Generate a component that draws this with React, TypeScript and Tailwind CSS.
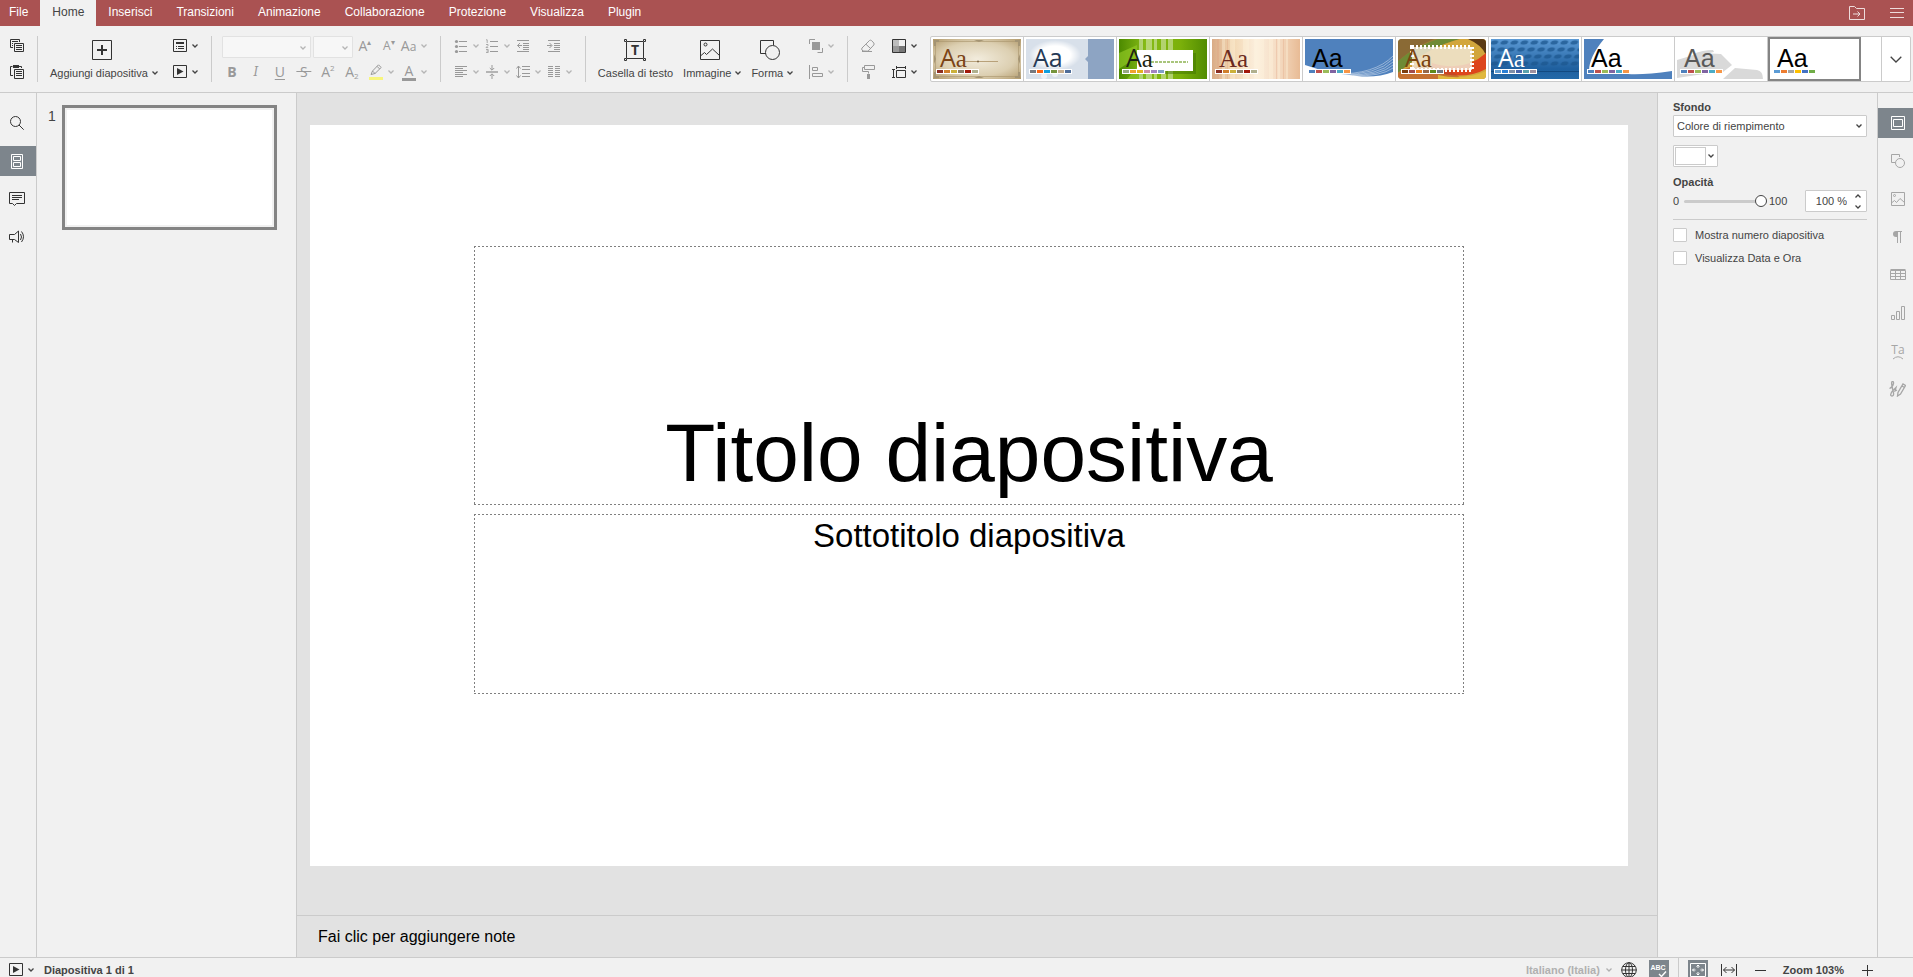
import { useState } from "react";
import type { ReactNode } from "react";

type IconProps = { w?: number; h?: number; children: ReactNode; className?: string };

function Icon({ w = 14, h = 14, children, className = "" }: IconProps) {
  return (
    <svg
      width={w}
      height={h}
      viewBox={`0 0 ${w} ${h}`}
      fill="none"
      stroke="currentColor"
      className={`shrink-0 ${className}`}
      aria-hidden="true"
    >
      {children}
    </svg>
  );
}

function Caret({ className = "" }: { className?: string }) {
  return (
    <Icon w={6} h={4} className={className}>
      <path d="M.5 .5 3 3 5.5 .5" strokeWidth="1.3" />
    </Icon>
  );
}

/* ---------- toolbar icons ---------- */

const CopyIcon = () => (
  <Icon>
    <path d="M3 8.500H.5v-8h9V3" />
    <path d="M2 2.500h6M2 4.500h1M2 6.500h1" />
    <path d="M4.500 4.500h9v8h-9z" />
    <path d="M6 6.500h6M6 8.500h6M6 10.500h6" />
  </Icon>
);
const PasteIcon = () => (
  <Icon>
    <path d="M3 10.500H.5v-9h2M9 1.500h2.500V3" />
    <path d="M3 0h6v3H3z" fill="currentColor" stroke="none" />
    <path d="M4.500 4.500h9v9h-9z" />
    <path d="M6 6.500h6M6 8.500h6M6 10.500h6" />
  </Icon>
);
const AddSlideIcon = () => (
  <Icon w={20} h={20}>
    <path d="M.5 .5h19v19H.5z" />
    <path d="M10 5v10M5 10h10" strokeWidth="2" />
  </Icon>
);
const LayoutIcon = () => (
  <Icon>
    <path d="M.5 .5h13v12H.5z" />
    <path d="M3 4h8" strokeWidth="2" />
    <path d="M3 7.500h1M5 7.500h6M3 9.500h1M5 9.500h6" />
  </Icon>
);
const PlayIcon = () => (
  <Icon>
    <path d="M.5 .5h13v12H.5z" />
    <path d="M4 3v7l6.500-3.500z" fill="currentColor" stroke="none" />
  </Icon>
);
const HighlightIcon = () => (
  <Icon w={14} h={16}>
    <path d="M2 10.500 3.500 7 9.500 .8l2.700 2.700L6 9.500zM3.500 7 6 9.500M8 2.300 10.700 5" />
    <path d="M0 14.500h14" stroke="#f7f57c" strokeWidth="3" />
  </Icon>
);
const BulletsIcon = () => (
  <Icon>
    <path d="M5 2.500h8M5 7.500h8M5 12.500h8" />
    <g fill="currentColor" stroke="none">
      <circle cx="2.500" cy="2.500" r="1.600" />
      <circle cx="2.500" cy="7.500" r="1.600" />
      <circle cx="2.500" cy="12.500" r="1.600" />
    </g>
  </Icon>
);
const NumberingIcon = () => (
  <Icon>
    <path d="M5 2.500h8M5 7.500h8M5 12.500h8" />
    <path d="M1 .8h1.200V4M1 5.500h2v1L1 8.600h2.200M1 10.500h2.200v3H1M1.500 12h1.500" strokeWidth=".8" />
  </Icon>
);
const OutdentIcon = () => (
  <Icon>
    <path d="M1 1.500h12M7 4.500h6M7 6.500h6M7 8.500h6M7 10.500h6M1 12.500h12" />
    <path d="M6 6.500H1.500M4 4 1.500 6.500 4 9" />
  </Icon>
);
const IndentIcon = () => (
  <Icon>
    <path d="M1 1.500h12M7 4.500h6M7 6.500h6M7 8.500h6M7 10.500h6M1 12.500h12" />
    <path d="M0 6.500h4.500M2.500 4 5 6.500 2.500 9" />
  </Icon>
);
const AlignLeftIcon = () => (
  <Icon>
    <path d="M1 1.500h12M1 3.500h8M1 5.500h12M1 7.500h8M1 9.500h12M1 11.500h8" />
  </Icon>
);
const AlignMiddleIcon = () => (
  <Icon>
    <path d="M1 6.500h12M1 7.500h12" strokeWidth=".7" />
    <path d="M7 0v5M4.800 3 7 5.200 9.200 3M7 14V9M4.800 11 7 8.800 9.200 11" />
  </Icon>
);
const LineSpacingIcon = () => (
  <Icon>
    <path d="M2.500 1v12M.5 3.500l2-2.500 2 2.500M.5 10.500l2 2.500 2-2.500" />
    <path d="M6 1.500h8M6 4.500h8M6 8.500h8M6 11.500h8" />
  </Icon>
);
const ColumnsIcon = () => (
  <Icon>
    <path d="M1 1.500h5M1 3.500h5M1 5.500h5M1 7.500h5M1 9.500h5M1 11.500h5M8 1.500h5M8 3.500h5M8 5.500h5M8 7.500h5M8 9.500h5M8 11.500h5" />
  </Icon>
);
const TextBoxIcon = () => (
  <Icon w={22} h={22}>
    <path d="M2.500 3v16M19.500 3v16M3 2.500h16M3 19.500h16" />
    <path d="M.5 .5h2v2h-2zM19.500 .5h2v2h-2zM.5 19.500h2v2h-2zM19.500 19.500h2v2h-2z" />
    <text
      x="11"
      y="16"
      textAnchor="middle"
      fill="currentColor"
      stroke="none"
      fontFamily="Open Sans, Liberation Sans, sans-serif"
      fontWeight="700"
      fontSize="14"
    >
      T
    </text>
  </Icon>
);
const ImageIcon = () => (
  <Icon w={20} h={20}>
    <path d="M.5 .5h19v19H.5z" />
    <circle cx="5.500" cy="4.500" r="1.500" />
    <path d="M1 15.500l3.500-3 2 2 6-5.500 7 6.500" />
  </Icon>
);
const ShapeIcon = () => (
  <Icon w={20} h={20}>
    <path d="M6 13.500H.5V.5h13V5" />
    <circle cx="12.500" cy="12.500" r="7" />
  </Icon>
);
const ArrangeIcon = () => (
  <Icon>
    <path d="M3 3h8v8H3z" fill="currentColor" stroke="none" />
    <path d="M6 .5H.5V5M8.500 13.500h5V9" />
  </Icon>
);
const AlignObjectsIcon = () => (
  <Icon>
    <path d="M.5 0v14M3.500 2.500h5v3h-5zM3.500 8.500h10v3h-10z" />
  </Icon>
);
const EraserIcon = () => (
  <Icon>
    <path d="M2 12 1 11Q.3 10 1 9L8.500 1.500Q9.500 .8 10.500 1.500L12.800 4Q13.400 5 12.800 6L7 12.200zM5 5.300l5 4.600M1 12.500h10" />
  </Icon>
);
const RollerIcon = () => (
  <Icon>
    <path d="M3.500 .5h10v4h-10zM3.500 2.500H1.500v4h6v2" />
    <path d="M6 9h3v5H6z" fill="currentColor" stroke="none" />
  </Icon>
);
const SchemeIcon = () => (
  <Icon>
    <path d="M1 1h6v6H1z" fill="#bdbdbd" stroke="none" />
    <path d="M7 1h6v6H7z" fill="#f1f1f1" stroke="none" />
    <path d="M1 7h6v6H1z" fill="#999" stroke="none" />
    <path d="M7 7h6v6H7z" fill="#777" stroke="none" />
    <path d="M.5 .5h13v13H.5z" />
  </Icon>
);
const SlideSizeIcon = () => (
  <Icon>
    <path d="M4.500 5.500h9v7h-9zM1.500 4v9M0 4.500h3M0 12.500h3M4 2.500h10M4.500 1v3M13.500 1v3" />
  </Icon>
);

/* ---------- theme gallery ---------- */

type Theme = {
  name: string;
  fg: string;
  fontA: string;
  fontB: string;
  colors: string[];
  art: ReactNode;
};

const SANS = "Liberation Sans, Arial, sans-serif";
const HUMAN = "Open Sans, Noto Sans, sans-serif";
const SERIF = "Liberation Serif, Times New Roman, serif";

const themes: Theme[] = [
  {
    name: "Classic",
    fg: "#7b4416",
    fontA: HUMAN,
    fontB: SERIF,
    colors: ["#8c2e22", "#d17f2c", "#ccb13a", "#8c7d68", "#a3190b", "#b0b08e"],
    art: (
      <>
        <defs>
          <radialGradient id="classic" cx=".5" cy=".5" r=".7">
            <stop offset="0" stopColor="#f2ecdd" />
            <stop offset=".6" stopColor="#dccfb1" />
            <stop offset="1" stopColor="#b39b6d" />
          </radialGradient>
        </defs>
        <path d="M0 0h88v40H0z" fill="url(#classic)" />
        <path d="M2.500 2.500h83v35h-83z" fill="none" stroke="#a8946c" strokeOpacity=".6" />
        <path d="M1 1h5v2H3v4H1zM87 1h-5v2h3v4h2zM1 39h5v-2H3v-4H1zM87 39h-5v-2h3v-4h2zM41 1h10l-5 2zM41 39h10l-5-2zM1 15l2 5-2 5zM87 15l-2 5 2 5z" fill="#a49474" />
        <path d="M32 22.500h33" stroke="#b8a17a" />
        <circle cx="45" cy="22.500" r="1" fill="#7d6644" />
      </>
    ),
  },
  {
    name: "Dotted",
    fg: "#263a56",
    fontA: HUMAN,
    fontB: HUMAN,
    colors: ["#76797f", "#fa6414", "#0f9fe0", "#76953e", "#c5ad8e", "#4f6d99"],
    art: (
      <>
        <defs>
          <radialGradient id="cloud">
            <stop offset=".6" stopColor="#fff" />
            <stop offset="1" stopColor="#fff" stopOpacity="0" />
          </radialGradient>
        </defs>
        <path d="M0 0h62v40H0z" fill="#d8e0ea" />
        <ellipse cx="29" cy="16" rx="26" ry="15" fill="url(#cloud)" />
        <circle cx="18" cy="37" r="3" fill="#edf1f6" />
        <circle cx="29" cy="35" r="3" fill="#edf1f6" />
        <path d="M62 0h26v40H62zM62 17l-3 3 3 3z" fill="#8da4c3" />
      </>
    ),
  },
  {
    name: "Green leaf",
    fg: "#1d2410",
    fontA: HUMAN,
    fontB: SERIF,
    colors: ["#98a982", "#f0a22e", "#e6b31e", "#cf8fa4", "#a285c1", "#7fa0c6"],
    art: (
      <>
        <defs>
          <linearGradient id="leaf">
            <stop offset="0" stopColor="#4c8a00" />
            <stop offset=".3" stopColor="#86bb17" />
            <stop offset=".7" stopColor="#7bb00a" />
            <stop offset="1" stopColor="#518c02" />
          </linearGradient>
        </defs>
        <path d="M0 0h88v40H0z" fill="url(#leaf)" />
        <path d="M0 14 18 6v12L0 30zM8 40l12-14v14z" fill="#98cf28" fillOpacity=".6" />
        <path d="M20 0h4v40h-4zM27 0h6v40h-6zM35 0h3v40h-3zM42 0h5v40h-5zM49 0h5v40h-5z" fill="#fff" fillOpacity=".4" />
        <path d="M20 14h57v21H20z" fill="#3f7300" fillOpacity=".5" />
        <path d="M18 11h56v21H18z" fill="#fff" />
        <path d="M32 23h37" stroke="#a9c57c" strokeWidth="2" strokeDasharray="3 1" />
      </>
    ),
  },
  {
    name: "Lines",
    fg: "#6b2a20",
    fontA: SERIF,
    fontB: SERIF,
    colors: ["#8c2e22", "#d17f2c", "#ccb13a", "#8c7d68", "#a3190b", "#b0b08e"],
    art: (
      <>
        <defs>
          <linearGradient id="lines">
            <stop offset="0" stopColor="#d9ab86" />
            <stop offset=".25" stopColor="#f3d9b5" />
            <stop offset=".5" stopColor="#fbeedd" />
            <stop offset=".75" stopColor="#f5dcc3" />
            <stop offset="1" stopColor="#e8bb95" />
          </linearGradient>
        </defs>
        <path d="M0 0h88v40H0z" fill="url(#lines)" />
        <path d="M10 0h3v40h-3zM18 0h5v40h-5zM31 0h6v40h-6zM42 0h10v40H42zM57 0h4v40h-4zM66 0h2v40h-2zM74 0h2v40h-2z" fill="#fff6e0" fillOpacity=".35" />
        <path d="M5 0h2v40H5zM15 0h1v40h-1zM64 0h1v40h-1zM71 0h1v40h-1z" fill="#dfa07e" fillOpacity=".3" />
      </>
    ),
  },
  {
    name: "Corner",
    fg: "#000",
    fontA: SANS,
    fontB: SANS,
    colors: ["#4f81bd", "#c0504d", "#9bbb59", "#8064a2", "#4bacc6", "#f79646"],
    art: (
      <>
        <path d="M0 0h88v33Q72 39 52 37Q22 34 0 26z" fill="#4f81bd" />
        <g fill="none" stroke="#fff" strokeOpacity=".6" strokeWidth=".7">
          <path d="M35 35.500Q72 36 88 20M40 36Q74 36.500 88 23M44 36.500Q75 37 88 26M48 37Q76 37.500 88 29M30 35Q70 35.500 88 17" />
        </g>
      </>
    ),
  },
  {
    name: "Official",
    fg: "#7a4410",
    fontA: HUMAN,
    fontB: SERIF,
    colors: ["#7f3f10", "#a34c4c", "#ea7f1c", "#97694a", "#5f8a1c", "#6f7681"],
    art: (
      <>
        <defs>
          <clipPath id="officialClip">
            <rect width="88" height="40" rx="4" />
          </clipPath>
        </defs>
        <g clipPath="url(#officialClip)">
          <path d="M0 0h88v40H0z" fill="#9a7d34" />
          <path d="M0 0h36Q16 8 0 22z" fill="#8a6a35" />
          <path d="M0 22Q16 8 40 0h22Q30 8 0 34z" fill="#6f8a35" />
          <path d="M0 34Q30 8 62 0h26v40H0z" fill="#d2a63c" />
          <path d="M70 0h18v16Q84 6 70 0z" fill="#5b3a14" />
          <path d="M34 24Q66 34 88 14v16Q66 42 34 32z" fill="#dd451c" />
          <path d="M0 34Q14 24 34 27t30 13H0z" fill="#b8452a" fillOpacity=".55" />
          <path d="M40 36Q66 42 88 32v8H40z" fill="#e0b83f" />
        </g>
        <path d="M14 8h60v23H14z" fill="#f1e6d4" fillOpacity=".85" />
        <path d="M14 8h60v23H14z" fill="none" stroke="#fff" strokeWidth="4" strokeDasharray="2 2" />
      </>
    ),
  },
  {
    name: "Pixel",
    fg: "#fff",
    fontA: HUMAN,
    fontB: SERIF,
    colors: ["#629dd1", "#297fd5", "#7f8fa9", "#4a66ac", "#5aa2ae", "#9d90a0"],
    art: (
      <>
        <defs>
          <linearGradient id="pixel" x2="0" y2="1">
            <stop offset="0" stopColor="#5d9bd6" />
            <stop offset=".75" stopColor="#1e5f9e" />
            <stop offset="1" stopColor="#2469a8" />
          </linearGradient>
          <pattern id="dots" width="10" height="7" patternUnits="userSpaceOnUse" patternTransform="skewX(-25)">
            <ellipse cx="5" cy="3.500" rx="3.700" ry="2.200" fill="#1c568f" fillOpacity=".75" />
          </pattern>
        </defs>
        <path d="M0 0h88v40H0z" fill="url(#pixel)" />
        <path d="M0 0h88v28H0z" fill="url(#dots)" />
        <path d="M0 32.500h88" stroke="#134a80" />
      </>
    ),
  },
  {
    name: "Safari",
    fg: "#000",
    fontA: SANS,
    fontB: SANS,
    colors: ["#4f81bd", "#c0504d", "#9bbb59", "#8064a2", "#4bacc6", "#f79646"],
    art: (
      <>
        <path d="M0 0h88v40H0z" fill="#4f81bd" />
        <path d="M20 0h68v32Q60 36 44 35T5 32Q5 18 20 0z" fill="#fff" />
      </>
    ),
  },
  {
    name: "Turtle",
    fg: "#595959",
    fontA: SANS,
    fontB: SANS,
    colors: ["#4f81bd", "#c0504d", "#9bbb59", "#8064a2", "#4bacc6", "#f79646"],
    art: (
      <>
        <path d="M0 0h88v40H0z" fill="#fff" />
        <path
          d="M0 21 10 18l12-4 22 1 11 11-9 7-26 3-20 3zM16 15q10-4 20-4l1 2-14 3zM46 40l12-11 22 2q6 1 6 9z"
          fill="#d9d9d9"
        />
      </>
    ),
  },
  {
    name: "Blank",
    fg: "#000",
    fontA: SANS,
    fontB: SANS,
    colors: ["#5b9bd5", "#ed7d31", "#a5a5a5", "#ffc000", "#4472c4", "#70ad47"],
    art: <path d="M0 0h88v40H0z" fill="#fff" />,
  },
];

function ThemeThumb({ theme }: { theme: Theme }) {
  return (
    <svg width="88" height="40" viewBox="0 0 88 40" aria-hidden="true">
      {theme.art}
      <text x="7" y="28" fontSize="25" fill={theme.fg}>
        <tspan fontFamily={theme.fontA}>A</tspan>
        <tspan fontFamily={theme.fontB}>a</tspan>
      </text>
      <path d="M3 30h43v5H3z" fill="#fff" />
      {theme.colors.map((c, i) => (
        <rect key={i} x={4 + i * 7} y="31" width="6" height="3" fill={c} />
      ))}
    </svg>
  );
}

/* ---------- small building blocks ---------- */

function Separator() {
  return <div className="h-[46px] w-px shrink-0 bg-[#cbcbcb]" />;
}

function ToolButton({
  label,
  children,
  caret = false,
  disabled = false,
}: {
  label: string;
  children: ReactNode;
  caret?: boolean;
  disabled?: boolean;
}) {
  return (
    <button
      type="button"
      aria-label={label}
      disabled={disabled}
      className={`flex h-5 shrink-0 items-center gap-[5px] ${disabled ? "text-[#999]" : "text-[#333]"}`}
    >
      {children}
      {caret && <Caret className={disabled ? "text-[#b5b5b5]" : "text-[#444]"} />}
    </button>
  );
}

function LetterButton({ label, children }: { label: string; children: ReactNode }) {
  return (
    <button
      type="button"
      aria-label={label}
      disabled
      className="flex h-5 w-6 shrink-0 items-center justify-center font-['Open_Sans',sans-serif] text-sm leading-5 text-[#999]"
    >
      {children}
    </button>
  );
}

function BigButton({ label, children, caret = false }: { label: string; children: ReactNode; caret?: boolean }) {
  return (
    <button type="button" className="flex shrink-0 flex-col items-center gap-[2px] pt-[3px] text-[#333]">
      <span className={`flex h-[22px] items-center ${caret ? "pr-1" : ""}`}>{children}</span>
      <span className="flex h-5 items-center gap-1 whitespace-nowrap text-[#444]">
        {label}
        {caret && <Caret />}
      </span>
    </button>
  );
}

function FakeCombo({ label, className }: { label: string; className: string }) {
  return (
    <span className={`relative block h-[22px] shrink-0 ${className}`}>
      <select
        aria-label={label}
        disabled
        className="h-full w-full appearance-none rounded-[1px] border border-[#e2e2e2] bg-[#f7f7f7]"
      />
      <Caret className="absolute top-[10px] right-[5px] text-[#b5b5b5]" />
    </span>
  );
}

const tabs = [
  "File",
  "Home",
  "Inserisci",
  "Transizioni",
  "Animazione",
  "Collaborazione",
  "Protezione",
  "Visualizza",
  "Plugin",
];

function Header({ active, onSelect }: { active: string; onSelect: (t: string) => void }) {
  return (
    <header className="flex h-[26px] shrink-0 items-stretch justify-between bg-[#aa5252] text-xs text-white">
      <nav className="flex">
        {tabs.map((t) => (
          <button
            key={t}
            type="button"
            onClick={() => onSelect(t)}
            className={`px-3 pb-[2px] first:pl-[9px] ${t === active ? "bg-[#f1f1f1] text-[#444]" : ""}`}
          >
            {t}
          </button>
        ))}
      </nav>
      <div className="flex items-center gap-[25px] pr-[9px] text-[#eedcdc]">
        <button type="button" aria-label="Apri percorso file">
          <Icon w={16} h={14}>
            <path d="M.5 .5h5l2 2h8v11H.5zM4 8h7M8.500 5.500 11 8l-2.500 2.500" />
          </Icon>
        </button>
        <button type="button" aria-label="Impostazioni di visualizzazione">
          <Icon>
            <path d="M0 2.500h14M0 6.500h14M0 11.500h14" />
          </Icon>
        </button>
      </div>
    </header>
  );
}

function Toolbar() {
  const [selected, setSelected] = useState("Blank");
  return (
    <div className="flex h-[67px] shrink-0 items-start overflow-hidden border-b border-[#cbcbcb] pt-[10px] pr-[2px]">
      <div className="flex w-[37px] shrink-0 flex-col gap-[6px] pl-[10px]">
        <ToolButton label="Copia">
          <CopyIcon />
        </ToolButton>
        <ToolButton label="Incolla">
          <PasteIcon />
        </ToolButton>
      </div>
      <Separator />

      <div className="flex shrink-0 gap-[15px] pr-[13px] pl-3">
        <BigButton label="Aggiungi diapositiva" caret>
          <AddSlideIcon />
        </BigButton>
        <div className="flex flex-col gap-[6px]">
          <ToolButton label="Cambia layout" caret>
            <LayoutIcon />
          </ToolButton>
          <ToolButton label="Avvia presentazione" caret>
            <PlayIcon />
          </ToolButton>
        </div>
      </div>
      <Separator />

      <div className="flex shrink-0 flex-col gap-[6px] pr-[13px] pl-2">
        <div className="flex h-5 items-start pl-[2px]">
          <FakeCombo label="Tipo di carattere" className="mr-[2px] w-[89px]" />
          <FakeCombo label="Dimensione carattere" className="w-10" />
          <LetterButton label="Aumenta dimensione">
            A<sup className="-top-1 text-[8px] leading-none">▴</sup>
          </LetterButton>
          <LetterButton label="Riduci dimensione">
            <span className="text-xs">A</span>
            <sup className="-top-1 text-[8px] leading-none">▾</sup>
          </LetterButton>
          <ToolButton label="Maiuscole/minuscole" caret disabled>
            <span className="w-[15px] font-['Open_Sans',sans-serif] text-sm leading-5">
              A<span className="text-xs">a</span>
            </span>
          </ToolButton>
        </div>
        <div className="flex h-5 items-center">
          <LetterButton label="Grassetto">
            <b>B</b>
          </LetterButton>
          <LetterButton label="Corsivo">
            <i className="font-['DejaVu_Serif',serif] text-xs">I</i>
          </LetterButton>
          <LetterButton label="Sottolineato">
            <span className="underline underline-offset-2">U</span>
          </LetterButton>
          <LetterButton label="Barrato">
            <s>&nbsp;S&nbsp;</s>
          </LetterButton>
          <LetterButton label="Apice">
            A<sup className="-top-1 text-[8px] leading-none">2</sup>
          </LetterButton>
          <LetterButton label="Pedice">
            A<sub className="top-1 text-[8px] leading-none">2</sub>
          </LetterButton>
          <div className="flex gap-2 pl-[5px]">
            <ToolButton label="Colore evidenziatore" caret disabled>
              <HighlightIcon />
            </ToolButton>
            <ToolButton label="Colore carattere" caret disabled>
              <span className="flex h-[17px] w-[14px] items-center justify-center border-b-[3px] border-[#999] font-['Open_Sans',sans-serif] text-sm leading-none">
                A
              </span>
            </ToolButton>
          </div>
        </div>
      </div>
      <Separator />

      <div className="flex shrink-0 flex-col gap-[6px] px-[13px]">
        <div className="flex gap-[6px]">
          <ToolButton label="Elenchi puntati" caret disabled>
            <BulletsIcon />
          </ToolButton>
          <ToolButton label="Numerazione" caret disabled>
            <NumberingIcon />
          </ToolButton>
          <span className="w-[25px]">
            <ToolButton label="Riduci rientro" disabled>
              <OutdentIcon />
            </ToolButton>
          </span>
          <ToolButton label="Aumenta rientro" disabled>
            <IndentIcon />
          </ToolButton>
        </div>
        <div className="flex gap-[6px]">
          <ToolButton label="Allineamento orizzontale" caret disabled>
            <AlignLeftIcon />
          </ToolButton>
          <ToolButton label="Allineamento verticale" caret disabled>
            <AlignMiddleIcon />
          </ToolButton>
          <ToolButton label="Interlinea" caret disabled>
            <LineSpacingIcon />
          </ToolButton>
          <ToolButton label="Colonne" caret disabled>
            <ColumnsIcon />
          </ToolButton>
        </div>
      </div>
      <Separator />

      <div className="flex shrink-0 gap-[10px] px-3">
        <BigButton label="Casella di testo">
          <TextBoxIcon />
        </BigButton>
        <BigButton label="Immagine" caret>
          <ImageIcon />
        </BigButton>
        <BigButton label="Forma" caret>
          <ShapeIcon />
        </BigButton>
      </div>
      <div className="flex shrink-0 flex-col gap-[6px] pr-[13px] pl-1">
        <ToolButton label="Disponi forma" caret disabled>
          <ArrangeIcon />
        </ToolButton>
        <ToolButton label="Allinea forma" caret disabled>
          <AlignObjectsIcon />
        </ToolButton>
      </div>
      <Separator />

      <div className="grid shrink-0 grid-cols-[31px_25px] gap-y-[6px] px-[13px]">
        <ToolButton label="Cancella stile" disabled>
          <EraserIcon />
        </ToolButton>
        <ToolButton label="Cambia combinazione colori" caret>
          <SchemeIcon />
        </ToolButton>
        <ToolButton label="Copia stile" disabled>
          <RollerIcon />
        </ToolButton>
        <ToolButton label="Dimensioni diapositiva" caret>
          <SlideSizeIcon />
        </ToolButton>
      </div>

      <div className="flex h-[46px] min-w-0 flex-1 rounded-[2px] border border-[#cbcbcb] bg-white">
        <div className="flex min-w-0 flex-1 overflow-hidden">
          {themes.map((t) => (
            <button
              key={t.name}
              type="button"
              aria-label={t.name}
              onClick={() => setSelected(t.name)}
              className={`w-[93px] shrink-0 border-r border-[#cbcbcb] p-[2px] ${
                t.name === selected ? "outline-2 -outline-offset-2 outline-[#848484]" : ""
              }`}
            >
              <ThemeThumb theme={t} />
            </button>
          ))}
        </div>
        <button
          type="button"
          aria-label="Altri temi"
          className="flex w-[29px] shrink-0 items-center justify-center border-l border-[#cbcbcb] text-[#444]"
        >
          <Icon w={12} h={7}>
            <path d="M.7 .7 6 6 11.300 .7" strokeWidth="1.300" />
          </Icon>
        </button>
      </div>
    </div>
  );
}

function RailButton({
  label,
  active = false,
  className,
  children,
}: {
  label: string;
  active?: boolean;
  className: string;
  children: ReactNode;
}) {
  return (
    <button
      type="button"
      aria-label={label}
      className={`flex h-[30px] items-center justify-center ${active ? "bg-[#7d858c] text-white" : ""} ${className}`}
    >
      {children}
    </button>
  );
}

function LeftRail() {
  return (
    <aside className="flex w-[37px] shrink-0 flex-col gap-2 border-r border-[#cbcbcb] pt-[15px] text-[#333]">
      <RailButton label="Trova" className="pr-[2px]">
        <Icon>
          <circle cx="5.500" cy="5.500" r="5" />
          <path d="M9 9l4.700 4.700" />
        </Icon>
      </RailButton>
      <RailButton label="Diapositive" active className="pr-[2px]">
        <Icon w={12} h={15}>
          <path d="M.5 .5h11v14H.5zM2.500 2.500h7v4h-7zM2.500 8.500h7v4h-7z" />
        </Icon>
      </RailButton>
      <RailButton label="Commenti" className="pr-[2px]">
        <Icon w={16} h={14}>
          <path d="M.5 .5h15v11H7.500L5.500 13.500 3.500 11.500H.5zM3 3.500h10M3 5.500h10M3 7.500h7" />
        </Icon>
      </RailButton>
      <RailButton label="Commenti e supporto" className="pr-[2px]">
        <Icon w={16} h={14}>
          <path d="M.5 4.500h5L9.500 1v11.500L5.500 9.500h-5zM3.500 9.500v3" />
          <path d="M11.500 4q2 3 0 6M12.500 1.500q4 5.200 0 10.500" />
        </Icon>
      </RailButton>
    </aside>
  );
}

function RightRail() {
  return (
    <aside className="flex w-9 shrink-0 flex-col gap-2 border-l border-[#cbcbcb] pt-[15px] text-[#a6a6a6]">
      <RailButton label="Impostazioni diapositiva" active className="pl-[5px]">
        <Icon>
          <path d="M.5 .5h13v13H.5zM2.500 3.500h9v7h-9z" />
        </Icon>
      </RailButton>
      <RailButton label="Impostazioni forma" className="pl-[5px]">
        <Icon>
          <path d="M4 8.500H.5v-8h8V3" />
          <circle cx="9" cy="9" r="4.500" />
        </Icon>
      </RailButton>
      <RailButton label="Impostazioni immagine" className="pl-[5px]">
        <Icon>
          <path d="M.5 .5h13v13H.5zM1 10.500l2.500-2 2 2 3.500-4 4.500 4" />
          <circle cx="3.500" cy="3.500" r="1" />
        </Icon>
      </RailButton>
      <RailButton label="Impostazioni paragrafo" className="pl-[5px]">
        <Icon>
          <path d="M6.500 1v12M9.500 1v12M5 1.500h6" />
          <path d="M7 1H5a3 3 0 0 0 0 6h2z" fill="currentColor" stroke="none" />
        </Icon>
      </RailButton>
      <RailButton label="Impostazioni tabella" className="pl-[5px]">
        <Icon w={16} h={12}>
          <path d="M.5 1.500h15v9H.5zM.5 .5h15M.5 4.500h15M.5 7.500h15M5.500 1.500v9M10.500 1.500v9" />
        </Icon>
      </RailButton>
      <RailButton label="Impostazioni grafico" className="pl-[5px]">
        <Icon>
          <path d="M.5 9.500h3v4h-3zM5.500 5.500h3v8h-3zM10.500 .5h3v13h-3z" />
        </Icon>
      </RailButton>
      <RailButton label="Impostazioni Text Art" className="pl-[5px]">
        <Icon w={18} h={20}>
          <text
            x="9"
            y="13"
            textAnchor="middle"
            fontFamily="Open Sans, sans-serif"
            fontSize="12"
            fill="currentColor"
            stroke="none"
          >
            Ta
          </text>
          <path d="M4 18q5-4.500 10 0" />
        </Icon>
      </RailButton>
      <RailButton label="Impostazioni firma" className="pl-[3px]">
        <Icon w={17} h={16} className="[stroke-width:1.3]">
          <path d="M.5 7.500q3-1 4-5 .3-2-1-2Q2 .7 3 5l1.500 7q.5 3-1.500 3T2 12.500q.5-2 3-4L7 6.500 6 10l2-1" />
          <path d="M8.500 15l.5-3.500L14 3l2.500 1.500L11.500 13zM13 5l2.500 1.500" />
        </Icon>
      </RailButton>
    </aside>
  );
}

function Checkbox({ label }: { label: string }) {
  return (
    <label className="flex h-[14px] items-center gap-2">
      <input
        type="checkbox"
        className="size-[14px] appearance-none rounded-[1px] border border-[#cbcbcb] bg-white checked:bg-[#7d858c]"
      />
      {label}
    </label>
  );
}

function SettingsPanel() {
  const [opacity, setOpacity] = useState(100);
  const step = (d: number) => setOpacity((v) => Math.min(100, Math.max(0, v + d)));
  return (
    <section className="flex w-[220px] shrink-0 flex-col border-l border-[#cbcbcb] pt-[6px] pr-[10px] pl-[15px]">
      <label htmlFor="fill" className="h-4 leading-4 font-bold">
        Sfondo
      </label>
      <div className="relative h-[22px]">
        <select
          id="fill"
          className="h-full w-full appearance-none rounded-[1px] border border-[#cbcbcb] bg-white pl-[3px]"
        >
          <option>Colore di riempimento</option>
        </select>
        <Caret className="absolute top-[9px] right-[5px]" />
      </div>
      <button
        type="button"
        aria-label="Colore"
        className="mt-2 flex h-[22px] w-[45px] items-center justify-between rounded-[1px] border border-[#cbcbcb] bg-white pr-[3px] pl-px"
      >
        <span className="h-[18px] w-[31px] border border-[#cbcbcb] bg-white" />
        <Caret />
      </button>
      <label htmlFor="opacity" className="mt-2 h-[14px] leading-[14px] font-bold">
        Opacità
      </label>
      <div className="mt-[1px] flex h-[22px] items-center">
        <span className="w-[11px]">0</span>
        <input
          id="opacity"
          type="range"
          min={0}
          max={100}
          value={opacity}
          onChange={(e) => setOpacity(Number(e.target.value))}
          className="h-[3px] w-[83px] appearance-none rounded-sm bg-[#cbcbcb] [&::-webkit-slider-thumb]:size-3 [&::-webkit-slider-thumb]:appearance-none [&::-webkit-slider-thumb]:rounded-full [&::-webkit-slider-thumb]:border [&::-webkit-slider-thumb]:border-[#444] [&::-webkit-slider-thumb]:bg-white"
        />
        <span className="ml-[2px]">100</span>
        <div className="ml-auto flex h-[22px] w-[62px] items-center rounded-[1px] border border-[#cbcbcb] bg-white pr-[5px]">
          <input
            type="text"
            aria-label="Opacità in percentuale"
            readOnly
            value={`${opacity} %`}
            className="w-[42px] min-w-0 flex-1 bg-transparent pr-2 text-right"
          />
          <div className="flex flex-col gap-[7px]">
            <button type="button" aria-label="Aumenta" onClick={() => step(1)}>
              <Caret className="rotate-180" />
            </button>
            <button type="button" aria-label="Riduci" onClick={() => step(-1)}>
              <Caret />
            </button>
          </div>
        </div>
      </div>
      <hr className="mt-[7px] mb-2 border-[#cbcbcb]" />
      <div className="flex flex-col gap-[9px]">
        <Checkbox label="Mostra numero diapositiva" />
        <Checkbox label="Visualizza Data e Ora" />
      </div>
    </section>
  );
}

const dashedFrame =
  "[background-image:linear-gradient(90deg,#7f7f7f_50%,transparent_50%),linear-gradient(90deg,#7f7f7f_50%,transparent_50%),linear-gradient(#7f7f7f_50%,transparent_50%),linear-gradient(#7f7f7f_50%,transparent_50%)] [background-size:4px_1px,4px_1px,1px_4px,1px_4px] [background-position:0_0,0_100%,0_0,100%_0] [background-repeat:repeat-x,repeat-x,repeat-y,repeat-y]";

function Editor() {
  return (
    <main className="flex min-w-0 flex-1 flex-col bg-[#e2e2e2] text-black">
      <div className="min-h-0 flex-1 overflow-hidden pt-8 pr-[29px] pl-[13px]">
        <div className="flex aspect-video flex-col gap-[9px] bg-white px-[164px] pt-[121px]">
          <div className={`flex h-[259px] items-end justify-center pb-[6px] ${dashedFrame}`}>
            <h1 className="text-[82px] leading-[92px] whitespace-nowrap">Titolo diapositiva</h1>
          </div>
          <div className={`flex h-[180px] items-start justify-center pt-[3px] ${dashedFrame}`}>
            <h2 className="text-[33px] leading-[38px] whitespace-nowrap">Sottotitolo diapositiva</h2>
          </div>
        </div>
      </div>
      <div className="h-[42px] shrink-0 border-t border-[#cbcbcb] pl-[21px] text-base leading-[42px]">
        Fai clic per aggiungere note
      </div>
    </main>
  );
}

function StatusBar() {
  return (
    <footer className="h-5 shrink-0 overflow-hidden border-t border-[#cbcbcb]">
      <div className="flex h-6 items-center justify-between pr-10 pl-[9px] font-bold">
        <div className="flex items-center">
          <ToolButton label="Avvia presentazione" caret>
            <PlayIcon />
          </ToolButton>
          <span className="ml-[10px]">Diapositiva 1 di 1</span>
        </div>
        <div className="flex items-center text-[#333]">
          <button type="button" disabled className="flex items-center gap-[6px] text-[#b0b0b0]">
            Italiano (Italia)
            <Caret />
          </button>
          <button type="button" aria-label="Lingua documento" className="ml-[9px]">
            <Icon w={16} h={16}>
              <circle cx="8" cy="8" r="7.300" />
              <ellipse cx="8" cy="8" rx="3.500" ry="7.300" />
              <path d="M8 .5v15M.5 8h15M2 4.500h12M2 11.500h12" />
            </Icon>
          </button>
          <button
            type="button"
            aria-label="Controllo ortografico"
            className="ml-3 flex size-5 items-center justify-center bg-[#7d858c] text-white"
          >
            <Icon w={18} h={16}>
              <text
                x="8"
                y="8"
                textAnchor="middle"
                fontFamily="Liberation Sans, sans-serif"
                fontWeight="700"
                fontSize="7"
                fill="currentColor"
                stroke="none"
              >
                ABC
              </text>
              <path d="M9 12l2.500 2.500L16 9.500" strokeWidth="1.400" />
            </Icon>
          </button>
          <span className="ml-[9px] h-6 w-px bg-[#cbcbcb]" />
          <button
            type="button"
            aria-label="Adatta alla diapositiva"
            className="ml-[9px] flex size-5 items-center justify-center bg-[#7d858c] text-white"
          >
            <Icon w={16} h={14}>
              <path d="M.5 .5h15v13H.5zM8 2v3M8 12V9M2.500 7h3M13.500 7h-3M6.500 3.500 8 2l1.500 1.500M6.500 10.500 8 12l1.500-1.500M4 5.500 2.500 7 4 8.500M12 5.500 13.500 7 12 8.500" />
            </Icon>
          </button>
          <button type="button" aria-label="Adatta alla larghezza" className="ml-[13px]">
            <Icon w={16} h={12}>
              <path d="M.5 0v12M15.500 0v12M2.500 6h11M5.500 3l-3 3 3 3M10.500 3l3 3-3 3" />
            </Icon>
          </button>
          <button type="button" aria-label="Zoom indietro" className="ml-[18px]">
            <Icon w={11} h={11}>
              <path d="M0 5.500h11" />
            </Icon>
          </button>
          <button type="button" className="ml-[17px] text-[#444]">
            Zoom 103%
          </button>
          <button type="button" aria-label="Zoom avanti" className="ml-[18px]">
            <Icon w={11} h={11}>
              <path d="M0 5.500h11M5.500 0v11" />
            </Icon>
          </button>
        </div>
      </div>
    </footer>
  );
}

export default function App() {
  const [tab, setTab] = useState("Home");
  return (
    <div className="flex h-screen flex-col overflow-hidden bg-[#f1f1f1] font-['Liberation_Sans',Arial,sans-serif] text-[11px] leading-4 text-[#444]">
      <Header active={tab} onSelect={setTab} />
      <Toolbar />
      <div className="flex min-h-0 flex-1">
        <LeftRail />
        <section className="flex w-[260px] shrink-0 items-start gap-[7px] border-r border-[#cbcbcb] pt-3 pl-[11px]">
          <span className="w-[7px] pt-[3px] text-sm leading-4">1</span>
          <button
            type="button"
            aria-label="Diapositiva 1"
            className="h-[125px] w-[215px] border-[3px] border-[#848484] p-[2px]"
          >
            <span className="block h-full w-full bg-white" />
          </button>
        </section>
        <Editor />
        <SettingsPanel />
        <RightRail />
      </div>
      <StatusBar />
    </div>
  );
}
